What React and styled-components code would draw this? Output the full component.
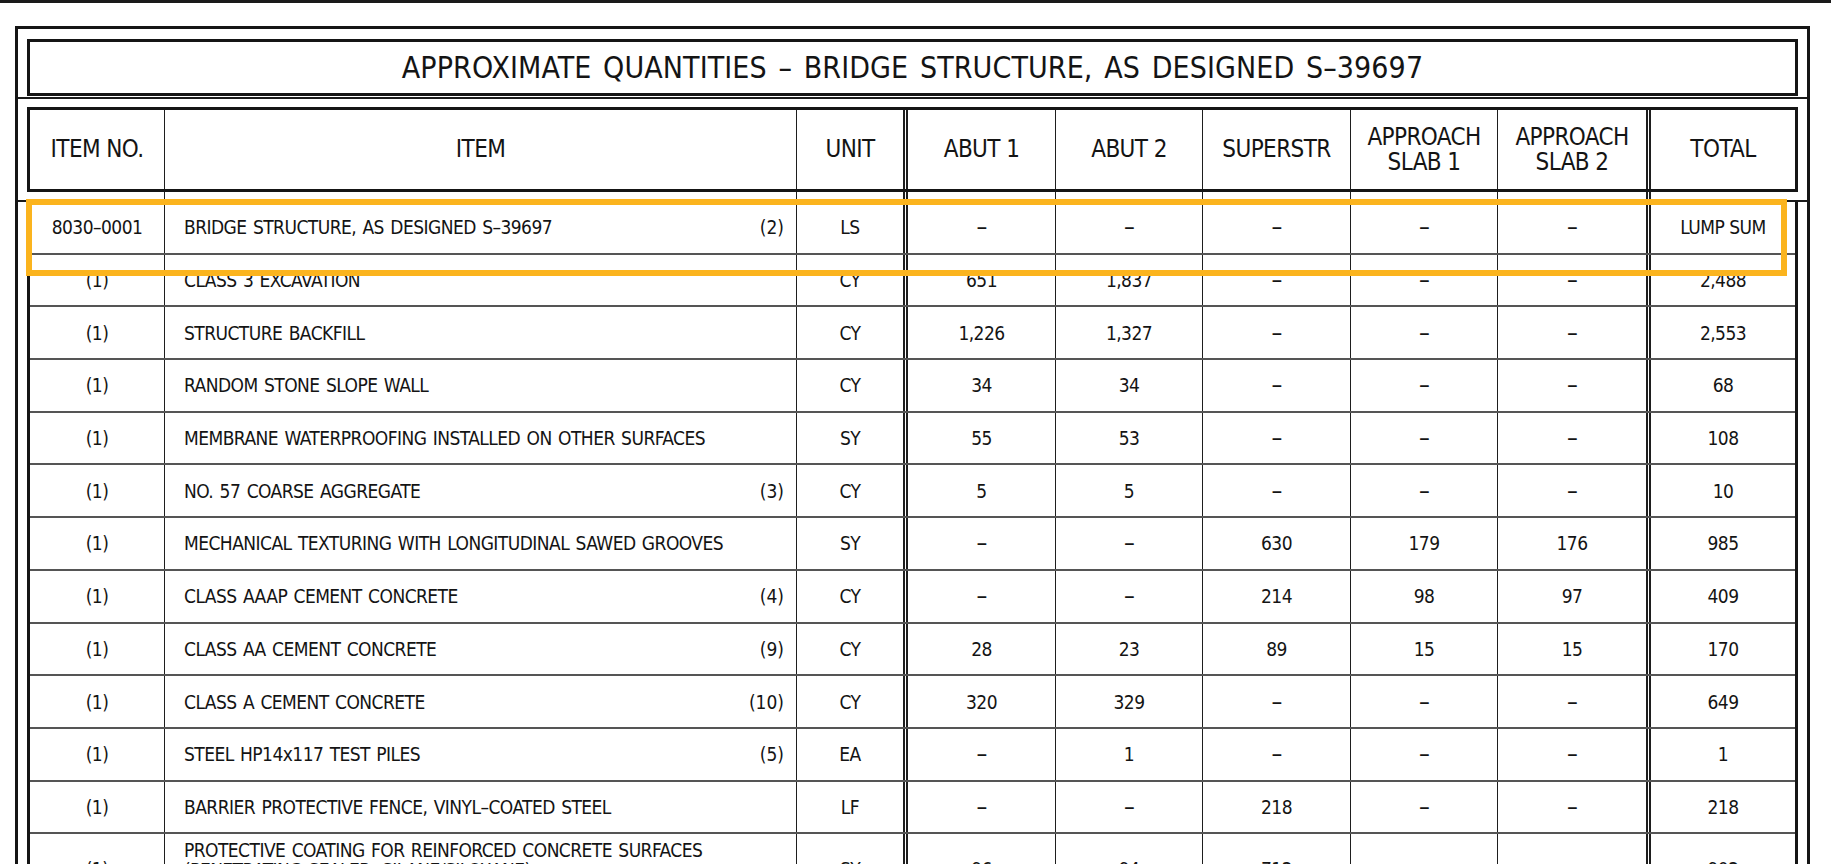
import React from "react"
import styled, { createGlobalStyle } from "styled-components"

const COLS = "135px 632px 111px 148px 147px 148px 147px 153px 144px"
const DOUBLE_AFTER = [2, 7]
const CAD_FONT = `"Liberation Sans Narrow", "DejaVu Sans Condensed", "Liberation Sans", Arial, sans-serif`

const GlobalStyle = createGlobalStyle`
  html, body {
    margin: 0;
    padding: 0;
    background: #fff;
  }
  body {
    font-family: ${CAD_FONT};
    color: #141414;
  }
`

const Page = styled.div`
  position: relative;
  box-sizing: border-box;
  width: 1831px;
  height: 864px;
  overflow: hidden;
  border-top: 3px solid #1a1a1a;
  padding-top: 23px;
`

const Frame = styled.div`
  box-sizing: border-box;
  margin-left: 15px;
  width: 1795px;
  border: 3px solid #151515;
  border-bottom: none;
`

const TitleSection = styled.div`
  padding: 10px 9px 1px;
  border-bottom: 2px solid #1a1a1a;
`

const TitleBox = styled.div`
  box-sizing: border-box;
  height: 57px;
  border: 3px solid #151515;
  display: flex;
  align-items: center;
  justify-content: center;
  font-size: 30px;
  letter-spacing: 0.1px;
  word-spacing: 3px;
`

const HeaderSection = styled.div`
  padding: 8px 9px 0;
  border-bottom: 2px solid #1a1a1a;
`

const Grid = styled.div`
  box-sizing: border-box;
  display: grid;
  grid-template-columns: ${COLS};
`

const HeaderBox = styled(Grid)`
  height: 85px;
  border: 3px solid #151515;
`

const Spacer = styled(Grid)`
  height: 8px;
  border-left: 3px solid transparent;
  border-right: 3px solid transparent;
`

const Cell = styled.div`
  box-sizing: border-box;
  display: flex;
  align-items: center;
  justify-content: center;
  min-width: 0;
  border-right: ${p => (p.$last ? "none" : p.$double ? "5px double #1e1e1e" : "1px solid #1e1e1e")};
`

const HeaderCell = styled(Cell)`
  font-size: 24px;
  line-height: 25px;
  letter-spacing: -0.6px;
  text-align: center;
  white-space: pre-line;
`

const DataTable = styled.div`
  margin: 0 9px;
  border-left: 3px solid #151515;
  border-right: 3px solid #151515;
`

const Row = styled(Grid)`
  height: ${p => (p.$tall ? "90px" : "52.7px")};
  border-bottom: 2px solid #555;
`

const DataCell = styled(Cell)`
  font-size: 19px;
  letter-spacing: -0.55px;
  white-space: nowrap;
  align-items: ${p => (p.$top ? "flex-start" : "center")};
  padding-top: ${p => (p.$top ? "24px" : "0")};
`

const ItemCell = styled(DataCell)`
  justify-content: space-between;
  align-items: ${p => (p.$top ? "flex-start" : "center")};
  padding: ${p => (p.$top ? "6px" : "0")} 12px 0 19px;
  word-spacing: 1.5px;
`

const ItemText = styled.span`
  line-height: 20px;
  white-space: pre-line;
`

const Note = styled.span`
  letter-spacing: 0;
`

const Dash = styled.span`
  font-size: 24px;
  line-height: 1;
`

const Highlight = styled.div`
  position: absolute;
  left: 26px;
  top: 196px;
  width: 1761px;
  height: 77px;
  box-sizing: border-box;
  border: 6px solid #fbb41e;
  pointer-events: none;
`

const headers = [
  "ITEM NO.",
  "ITEM",
  "UNIT",
  "ABUT 1",
  "ABUT 2",
  "SUPERSTR",
  "APPROACH\nSLAB 1",
  "APPROACH\nSLAB 2",
  "TOTAL",
]

const D = "–"

const rows = [
  { no: "8030–0001", item: "BRIDGE STRUCTURE, AS DESIGNED S–39697", note: "(2)", unit: "LS", vals: [D, D, D, D, D, "LUMP SUM"] },
  { no: "(1)", item: "CLASS 3 EXCAVATION", unit: "CY", vals: ["651", "1,837", D, D, D, "2,488"] },
  { no: "(1)", item: "STRUCTURE BACKFILL", unit: "CY", vals: ["1,226", "1,327", D, D, D, "2,553"] },
  { no: "(1)", item: "RANDOM STONE SLOPE WALL", unit: "CY", vals: ["34", "34", D, D, D, "68"] },
  { no: "(1)", item: "MEMBRANE WATERPROOFING INSTALLED ON OTHER SURFACES", unit: "SY", vals: ["55", "53", D, D, D, "108"] },
  { no: "(1)", item: "NO. 57 COARSE AGGREGATE", note: "(3)", unit: "CY", vals: ["5", "5", D, D, D, "10"] },
  { no: "(1)", item: "MECHANICAL TEXTURING WITH LONGITUDINAL SAWED GROOVES", unit: "SY", vals: [D, D, "630", "179", "176", "985"] },
  { no: "(1)", item: "CLASS AAAP CEMENT CONCRETE", note: "(4)", unit: "CY", vals: [D, D, "214", "98", "97", "409"] },
  { no: "(1)", item: "CLASS AA CEMENT CONCRETE", note: "(9)", unit: "CY", vals: ["28", "23", "89", "15", "15", "170"] },
  { no: "(1)", item: "CLASS A CEMENT CONCRETE", note: "(10)", unit: "CY", vals: ["320", "329", D, D, D, "649"] },
  { no: "(1)", item: "STEEL HP14x117 TEST PILES", note: "(5)", unit: "EA", vals: [D, "1", D, D, D, "1"] },
  { no: "(1)", item: "BARRIER PROTECTIVE FENCE, VINYL–COATED STEEL", unit: "LF", vals: [D, D, "218", D, D, "218"] },
  {
    no: "(1)",
    item: "PROTECTIVE COATING FOR REINFORCED CONCRETE SURFACES\n(PENETRATING SEALER, SILANE/SILOXANE)",
    unit: "SY",
    vals: ["96", "94", "712", D, D, "902"],
    tall: true,
  },
]

const Value = ({ v }) => (v === D ? <Dash>{D}</Dash> : v)

const DataRow = ({ row }) => {
  const top = !!row.tall
  return (
    <Row $tall={top}>
      <DataCell $top={top}>{row.no}</DataCell>
      <ItemCell $top={top}>
        <ItemText>{row.item}</ItemText>
        {row.note && <Note>{row.note}</Note>}
      </ItemCell>
      <DataCell $top={top} $double>{row.unit}</DataCell>
      {row.vals.map((v, i) => (
        <DataCell
          key={i}
          $top={top}
          $double={DOUBLE_AFTER.includes(i + 3)}
          $last={i === row.vals.length - 1}
        >
          <Value v={v} />
        </DataCell>
      ))}
    </Row>
  )
}

export default function App() {
  return (
    <>
      <GlobalStyle />
      <Page>
        <Frame>
          <TitleSection>
            <TitleBox>APPROXIMATE QUANTITIES – BRIDGE STRUCTURE, AS DESIGNED S–39697</TitleBox>
          </TitleSection>
          <HeaderSection>
            <HeaderBox>
              {headers.map((h, i) => (
                <HeaderCell key={h} $double={DOUBLE_AFTER.includes(i)} $last={i === headers.length - 1}>
                  {h}
                </HeaderCell>
              ))}
            </HeaderBox>
            <Spacer>
              {headers.map((h, i) => (
                <Cell key={h} $double={DOUBLE_AFTER.includes(i)} $last={i === headers.length - 1} />
              ))}
            </Spacer>
          </HeaderSection>
          <DataTable>
            {rows.map((r, i) => (
              <DataRow key={i} row={r} />
            ))}
          </DataTable>
        </Frame>
        <Highlight />
      </Page>
    </>
  )
}
